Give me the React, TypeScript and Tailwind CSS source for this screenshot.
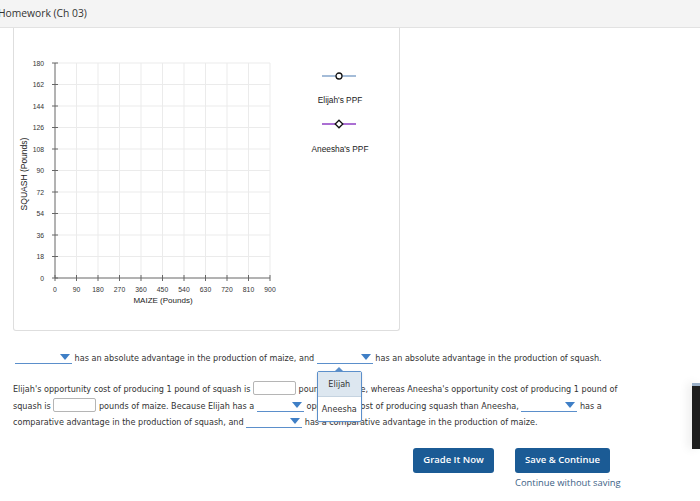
import React from "react";

const Dd = ({ w }: { w: number }) => (
  <span
    className="relative inline-block h-[13px] align-[-3px] border-b border-[#5b8fcb]"
    style={{ width: w }}
  >
    <svg className="absolute right-[2px] top-[3px]" width="10" height="6" viewBox="0 0 10 6">
      <path d="M0 0 L10 0 L5 6 Z" fill="#3f7fc6" />
    </svg>
  </span>
);

const Inp = ({ w }: { w: number }) => (
  <span
    className="inline-block h-[14px] align-[-3px] border border-[#b5b5b5] rounded-[2px] bg-white"
    style={{ width: w }}
  />
);

function Chart() {
  const x0 = 41, x1 = 256, yTop = 35, y0 = 250;
  const xs = [0, 90, 180, 270, 360, 450, 540, 630, 720, 810, 900];
  const ys = [0, 18, 36, 54, 72, 90, 108, 126, 144, 162, 180];
  const px = (v: number) => x0 + ((x1 - x0) * v) / 900;
  const py = (v: number) => y0 - ((y0 - yTop) * v) / 180;
  return (
    <svg width="300" height="302" viewBox="0 0 300 302" className="block">
      {xs.slice(1).map((v) => (
        <line key={"gx" + v} x1={px(v)} x2={px(v)} y1={yTop} y2={y0} stroke="#ebebeb" strokeWidth="1" />
      ))}
      {ys.slice(1).map((v) => (
        <line key={"gy" + v} x1={x0} x2={x1} y1={py(v)} y2={py(v)} stroke="#ebebeb" strokeWidth="1" />
      ))}
      <line x1={x0} x2={x0} y1={yTop} y2={y0} stroke="#666" strokeWidth="1" />
      <line x1={x0} x2={x1} y1={y0} y2={y0} stroke="#666" strokeWidth="1" />
      {ys.map((v) => (
        <g key={"ty" + v}>
          <line x1={x0 - 3} x2={x0 + 3} y1={py(v)} y2={py(v)} stroke="#666" strokeWidth="1" />
          <text x={x0 - 11} y={py(v) + 2.5} fontSize="6.8" textAnchor="end" fill="#333" fontFamily="Liberation Sans, Arial, sans-serif">
            {v}
          </text>
        </g>
      ))}
      {xs.map((v) => (
        <g key={"tx" + v}>
          <line x1={px(v)} x2={px(v)} y1={y0 - 3} y2={y0 + 3} stroke="#666" strokeWidth="1" />
          <text x={px(v)} y={y0 + 13.5} fontSize="6.8" textAnchor="middle" fill="#333" fontFamily="Liberation Sans, Arial, sans-serif">
            {v}
          </text>
        </g>
      ))}
      <text x={149} y={275} fontSize="8" textAnchor="middle" fill="#222" fontFamily="Liberation Sans, Arial, sans-serif">
        MAIZE (Pounds)
      </text>
      <text
        x={0}
        y={0}
        fontSize="8.5"
        textAnchor="middle"
        fill="#222"
        fontFamily="Liberation Sans, Arial, sans-serif"
        transform="translate(13 146) rotate(-90)"
      >
        SQUASH (Pounds)
      </text>
    </svg>
  );
}

export default function App() {
  return (
    <div className="relative w-[700px] h-[501px] overflow-hidden bg-white text-[#333]">
      <div className="h-[28px] bg-[#f4f4f4] border-b border-[#e2e2e2] flex items-center">
        <span className="ml-[-2px] text-[10.3px] text-[#333]" style={{ fontFamily: "'Open Sans', sans-serif" }}>
          Homework (Ch 03)
        </span>
      </div>

      <div className="ml-[13px] w-[387px] h-[303px] border-l border-r border-b border-[#dedede] rounded-b-[3px] flex">
        <Chart />
        <div className="flex flex-col items-center w-[60px] ml-[-4px] pt-[44px]" style={{ fontFamily: "'Liberation Sans', Arial, sans-serif" }}>
          <svg width="36" height="8" viewBox="0 0 36 8" className="block">
            <line x1="0" x2="34" y1="4" y2="4" stroke="#a4bcd8" strokeWidth="2" />
            <circle cx="17" cy="4" r="3" fill="white" stroke="#111" strokeWidth="1.3" />
          </svg>
          <div className="mt-[15px] text-[8.3px] leading-[10px] text-[#222] whitespace-nowrap">Elijah's PPF</div>
          <svg width="36" height="10" viewBox="0 0 36 10" className="block mt-[14px]">
            <line x1="0" x2="34" y1="5" y2="5" stroke="#ab6fd3" strokeWidth="2" />
            <path d="M17 1.2 L20.8 5 L17 8.8 L13.2 5 Z" fill="white" stroke="#111" strokeWidth="1.3" />
          </svg>
          <div className="mt-[15px] text-[8.3px] leading-[10px] text-[#222] whitespace-nowrap">Aneesha's PPF</div>
        </div>
      </div>

      <div className="text-[8.1px] text-[#333]" style={{ fontFamily: "'DejaVu Sans', Verdana, sans-serif" }}>
        <div className="relative mt-[19px] h-[16px] leading-[16px] pl-[15px] whitespace-nowrap">
          <Dd w={57} /> has an absolute advantage in the production of maize, and{" "}
          <span className="relative inline-block">
            <Dd w={56} />
            <div className="absolute left-0 top-[17px] w-[45px] z-10">
              <div className="mx-auto w-0 h-0 border-l-[4px] border-r-[4px] border-b-[4px] border-l-transparent border-r-transparent border-b-[#5b8fcb]" />
              <div className="border border-[#5b8fcb] rounded-[2px] bg-white shadow-sm">
                <div className="h-[25px] flex items-center justify-center bg-[#dde7f0] border-b border-[#c5d3e0] text-[8.1px]">Elijah</div>
                <div className="h-[24px] flex items-center justify-center text-[8.1px]">Aneesha</div>
              </div>
            </div>
          </span>{" "}
          has an absolute advantage in the production of squash.
        </div>

        <div className="mt-[15px] pl-[13px] leading-[16.5px]">
          <div className="whitespace-nowrap">
            Elijah's opportunity cost of producing 1 pound of squash is <Inp w={43} /> pounds of maize, whereas Aneesha's opportunity cost of producing 1 pound of
          </div>
          <div className="whitespace-nowrap">
            squash is <Inp w={43} /> pounds of maize. Because Elijah has a <Dd w={47} /> opportunity cost of producing squash than Aneesha, <Dd w={56} /> has a
          </div>
          <div className="whitespace-nowrap">
            comparative advantage in the production of squash, and <Dd w={56} /> has a comparative advantage in the production of maize.
          </div>
        </div>
      </div>

      <div className="mt-[17px] pl-[413px]" style={{ fontFamily: "'Open Sans', sans-serif" }}>
        <div className="flex gap-[21px]">
          <button className="w-[81px] h-[25px] rounded-[3px] bg-[#1b5b95] text-white text-[9.5px] font-semibold">Grade It Now</button>
          <div className="flex flex-col">
            <button className="w-[95px] h-[25px] rounded-[3px] bg-[#1b5b95] text-white text-[9.5px] font-semibold">Save &amp; Continue</button>
            <span className="mt-[3px] text-[9.4px] text-[#3d6286] whitespace-nowrap">Continue without saving</span>
          </div>
        </div>
      </div>

      <div className="absolute right-0 top-[383px] w-[8px] h-[66px] bg-[#1f1f1f] border-t-[3px] border-[#9bb0c8] shadow-[-4px_0_10px_rgba(0,0,0,0.08)]" />
    </div>
  );
}
